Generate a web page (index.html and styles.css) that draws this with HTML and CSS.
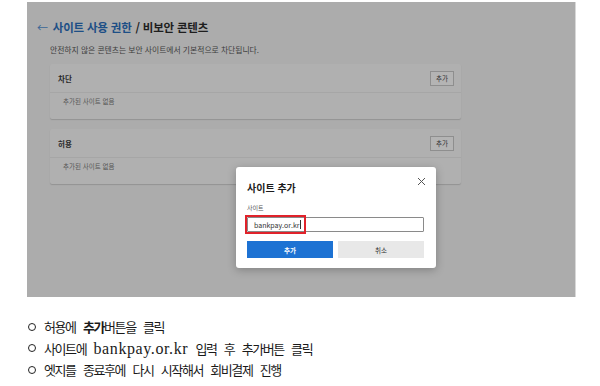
FILE: index.html
```html
<!DOCTYPE html>
<html lang="ko">
<head>
    <meta charset="UTF-8">
    <meta name="viewport" content="width=device-width, initial-scale=1.0">
    <title>비보안 콘텐츠 허용 안내</title>
    <link rel="stylesheet" href="styles.css">
</head>
<body>
    <div class="shot">
        <div class="page-title">
            <span class="back">&larr;</span>
            <span class="crumb">사이트 사용 권한</span>
            <span class="slash">/ 비보안 콘텐츠</span>
        </div>
        <div class="page-desc">안전하지 않은 콘텐츠는 보안 사이트에서 기본적으로 차단됩니다.</div>

        <div class="card">
            <div class="card-head">
                <span class="card-title">차단</span>
                <span class="small-btn">추가</span>
            </div>
            <div class="card-body">추가된 사이트 없음</div>
        </div>

        <div class="card">
            <div class="card-head">
                <span class="card-title">허용</span>
                <span class="small-btn">추가</span>
            </div>
            <div class="card-body">추가된 사이트 없음</div>
        </div>

        <div class="dialog">
            <div class="dialog-head">
                <span class="dialog-title">사이트 추가</span>
                <svg class="close" width="9" height="9" viewBox="0 0 9 9">
                    <path d="M1 1 L8 8 M8 1 L1 8" stroke="#555" stroke-width="1" fill="none"/>
                </svg>
            </div>
            <div class="field-label">사이트</div>
            <div class="field">
                <span class="field-text">bankpay.or.kr</span><span class="caret"></span>
                <div class="highlight"></div>
            </div>
            <div class="dialog-btns">
                <span class="btn-primary">추가</span>
                <span class="btn-cancel">취소</span>
            </div>
        </div>
    </div>

    <ul class="steps">
        <li>허용에 <b>추가</b>버튼을 클릭</li>
        <li>사이트에 <span class="latin">bankpay.or.kr</span> 입력 후 추가버튼 클릭</li>
        <li>엣지를 종료후에 다시 시작해서 회비결제 진행</li>
    </ul>
</body>
</html>
```

FILE: styles.css
```css
* {
    margin: 0;
    padding: 0;
    box-sizing: border-box;
}

body {
    background: #ffffff;
    font-family: 'Noto Sans CJK KR', 'Noto Sans', sans-serif;
    width: 600px;
    height: 386px;
    overflow: hidden;
}

.shot {
    position: relative;
    margin: 2px 0 0 27px;
    width: 549px;
    height: 295px;
    background: #acacac;
    padding: 16px 0 0 10px;
    border-right: 1px solid #d8d8d8;
}

.page-title {
    display: flex;
    align-items: center;
    height: 18px;
    font-size: 11.5px;
    font-weight: bold;
    color: #1e1e1e;
    letter-spacing: -0.2px;
}

.back {
    color: #3a6696;
    font-weight: normal;
    font-size: 11px;
    margin-right: 5px;
}

.crumb {
    color: #1d4f86;
    margin-right: 4px;
}

.page-desc {
    margin: 8px 0 0 13px;
    font-size: 7.8px;
    line-height: 12px;
    color: #3c3c3c;
}

.card {
    margin: 8px 0 0 13px;
    width: 411px;
    height: 55px;
    background: #b0b0b0;
    border-radius: 2px;
    box-shadow: 0 1px 1px rgba(0,0,0,0.15);
}

.card + .card {
    margin-top: 10px;
}

.card-head {
    display: flex;
    justify-content: space-between;
    align-items: center;
    height: 29px;
    padding: 0 7px 0 8px;
    border-bottom: 1px solid #a6a6a6;
}

.card-title {
    font-size: 7.5px;
    font-weight: bold;
    color: #2a2a2a;
}

.small-btn {
    display: flex;
    align-items: center;
    justify-content: center;
    width: 24px;
    height: 15px;
    border: 1px solid #8e8e8e;
    background: #b4b4b4;
    font-size: 6.5px;
    color: #303030;
}

.card-body {
    padding: 3px 0 0 13px;
    font-size: 6.5px;
    color: #555555;
}

.dialog {
    position: absolute;
    left: 209px;
    top: 165px;
    width: 200px;
    height: 101px;
    background: #ffffff;
    border-radius: 3px;
    box-shadow: 0 2px 8px rgba(0,0,0,0.25);
    padding: 9px 12px 0 11px;
}

.dialog-head {
    display: flex;
    justify-content: space-between;
    align-items: flex-start;
    height: 18px;
}

.dialog-title {
    font-size: 10px;
    font-weight: bold;
    color: #1b1b1b;
    margin-top: 4px;
}

.close {
    margin-top: 1px;
    margin-right: -2px;
}

.field-label {
    margin-top: 9px;
    font-size: 6px;
    line-height: 9px;
    color: #555555;
}

.field {
    position: relative;
    display: flex;
    align-items: center;
    margin-top: 5px;
    height: 15px;
    border: 1px solid #8a8a8a;
    border-radius: 1px;
    padding-left: 6px;
}

.field-text {
    font-size: 7px;
    color: #333333;
}

.caret {
    width: 1px;
    height: 9px;
    background: #333333;
}

.highlight {
    position: absolute;
    left: -3px;
    top: -3px;
    width: 61px;
    height: 19px;
    border: 2px solid #e0222a;
}

.dialog-btns {
    display: flex;
    gap: 5px;
    margin-top: 9px;
}

.btn-primary,
.btn-cancel {
    display: flex;
    align-items: center;
    justify-content: center;
    height: 17px;
    font-size: 6.5px;
}

.btn-primary {
    width: 86px;
    background: #1d72d3;
    color: #ffffff;
    font-weight: bold;
}

.btn-cancel {
    width: 86px;
    background: #e8e8e8;
    color: #333333;
}

.steps {
    list-style: none;
    margin: 19px 0 0 28px;
    font-size: 13px;
    line-height: 21.5px;
    color: #1a1a1a;
    letter-spacing: -1.4px;
    word-spacing: 5px;
}

.steps li {
    display: flex;
    align-items: center;
    white-space: pre;
}

.steps li::before {
    content: "";
    width: 6px;
    height: 6px;
    border: 1px solid #222;
    border-radius: 50%;
    margin-right: 8px;
}

.steps b {
    font-weight: bold;
}

.latin {
    font-family: 'Liberation Serif', serif;
    letter-spacing: 0.6px;
    word-spacing: 0;
    font-size: 16px;
}
```
